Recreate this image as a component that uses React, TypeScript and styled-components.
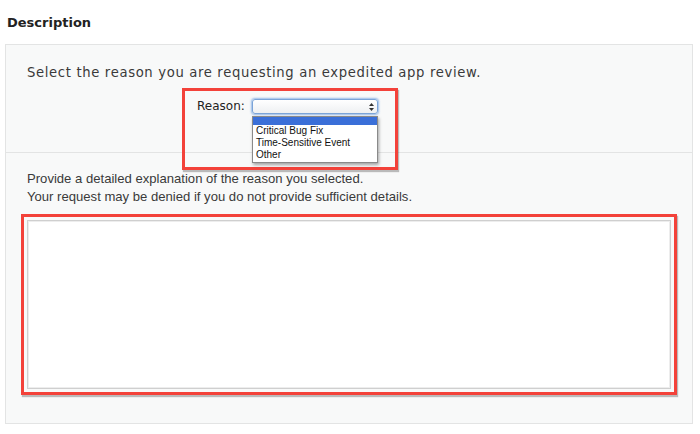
import styled, { createGlobalStyle } from "styled-components";

const GlobalStyle = createGlobalStyle`
  body {
    margin: 0;
    background: #ffffff;
    font-family: "DejaVu Sans", "Liberation Sans", sans-serif;
    color: #333333;
  }
`;

const Page = styled.div`
  width: 700px;
  height: 434px;
  overflow: hidden;
`;

const Heading = styled.h2`
  margin: 0;
  padding: 15px 7px 0 7px;
  height: 29px;
  box-sizing: content-box;
  font-size: 13px;
  line-height: 15px;
  font-weight: bold;
  color: #222;
`;

const Panel = styled.div`
  margin-left: 5px;
  width: 686px;
  border: 1px solid #e3e4e4;
  background: #f8f9f9;
`;

const TopSection = styled.div`
  height: 108px;
  border-bottom: 1px solid #e3e4e4;
  padding: 19px 0 0 21px;
  box-sizing: border-box;
  position: relative;
`;

const BottomSection = styled.div`
  padding: 17px 0 28px 15px;
`;

const Text = styled.p<{ $narrow?: boolean }>`
  margin: 0;
  font-family: ${(p) =>
    p.$narrow ? `"Liberation Sans", Arial, sans-serif` : `"DejaVu Sans", sans-serif`};
  font-size: ${(p) => (p.$narrow ? "13.1px" : "13.2px")};
  letter-spacing: ${(p) => (p.$narrow ? "0" : "0.65px")};
  line-height: 18px;
  color: #3a3a3a;
  white-space: nowrap;
`;

const TextBlock = styled.div`
  padding-left: 6px;
  margin-bottom: 8px;
`;

const Highlight = styled.div`
  border: 3px solid #f3423a;
  box-shadow: 1px 2px 1px rgba(0, 0, 0, 0.25);
  box-sizing: border-box;
`;

const ReasonBox = styled(Highlight)`
  position: relative;
  z-index: 1;
  margin: 6px 0 0 155px;
  width: 216px;
  height: 82px;
  padding: 8px 0 0 12px;
  display: flex;
  align-items: flex-start;
  gap: 11px;
`;

const Label = styled.span`
  font-family: "DejaVu Sans", sans-serif;
  font-size: 12px;
  line-height: 14px;
  color: #222;
  width: 44px;
  white-space: nowrap;
`;

const SelectWrap = styled.div`
  position: relative;
  width: 126px;
`;

const SelectBox = styled.div`
  height: 13px;
  border: 1px solid #7ba4d8;
  border-radius: 3px;
  background: linear-gradient(#ffffff, #eef0f2);
  box-shadow: 0 0 2px 1px rgba(110, 160, 225, 0.7);
  display: flex;
  justify-content: flex-end;
  align-items: center;
  padding-right: 3px;
`;

const ListBox = styled.div`
  position: absolute;
  top: 17px;
  left: 0;
  width: 126px;
  background: #ffffff;
  border: 1px solid #8a8a8a;
  box-shadow: 1px 2px 3px rgba(0, 0, 0, 0.35);
  box-sizing: border-box;
  padding-bottom: 1px;
`;

const Option = styled.div<{ $selected?: boolean }>`
  height: ${(p) => (p.$selected ? "8px" : "12px")};
  background: ${(p) => (p.$selected ? "#3a6fd8" : "transparent")};
  font-family: "Liberation Sans", Arial, sans-serif;
  font-size: 10px;
  line-height: 12px;
  padding-left: 3px;
  color: #111;
  white-space: nowrap;
`;

const ExplainBox = styled(Highlight)`
  width: 656px;
  height: 181px;
  padding: 3px;
`;

const TextArea = styled.textarea`
  display: block;
  width: 644px;
  height: 169px;
  box-sizing: border-box;
  margin: 0;
  resize: none;
  border: 1px solid #cfcfcf;
  box-shadow: inset 0 0 0 1px #ededed;
  background: #ffffff;
  outline: none;
`;

const Arrows = () => (
  <svg width="5" height="8" viewBox="0 0 5 8">
    <path d="M2.5 0 L5 3 L0 3 Z" fill="#333" />
    <path d="M2.5 8 L5 5 L0 5 Z" fill="#333" />
  </svg>
);

export default function App() {
  return (
    <Page>
      <GlobalStyle />
      <Heading>Description</Heading>
      <Panel>
        <TopSection>
          <Text>Select the reason you are requesting an expedited app review.</Text>
          <ReasonBox>
            <Label>Reason:</Label>
            <SelectWrap>
              <SelectBox>
                <Arrows />
              </SelectBox>
              <ListBox>
                <Option $selected />
                <Option>Critical Bug Fix</Option>
                <Option>Time-Sensitive Event</Option>
                <Option>Other</Option>
              </ListBox>
            </SelectWrap>
          </ReasonBox>
        </TopSection>
        <BottomSection>
          <TextBlock>
            <Text $narrow>Provide a detailed explanation of the reason you selected.</Text>
            <Text $narrow>Your request may be denied if you do not provide sufficient details.</Text>
          </TextBlock>
          <ExplainBox>
            <TextArea />
          </ExplainBox>
        </BottomSection>
      </Panel>
    </Page>
  );
}
